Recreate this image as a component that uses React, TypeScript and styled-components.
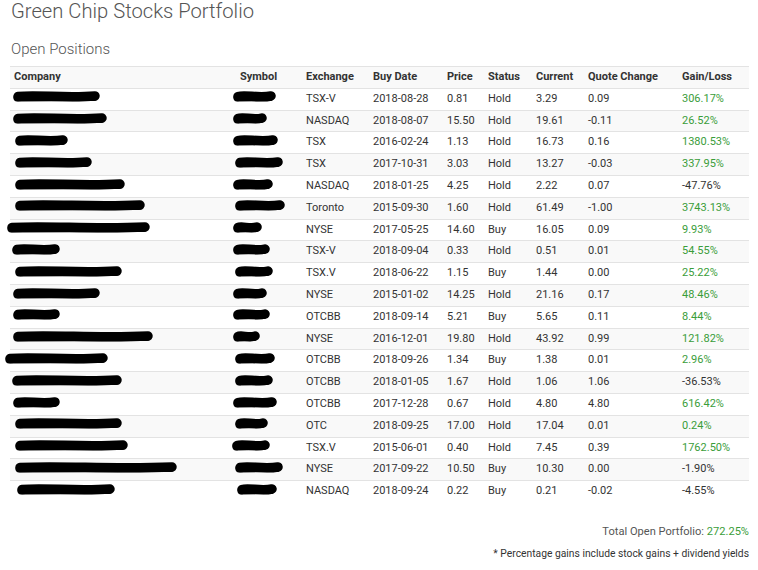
import React from "react";
import styled, { createGlobalStyle } from "styled-components";

const Global = createGlobalStyle`
  html, body { margin: 0; padding: 0; background: #fff; }
  body { font-family: Roboto, "Liberation Sans", Arial, sans-serif; color: #333; }
`;

const Page = styled.div`
  padding: 0 9px 0 10px;
  width: 758px;
  box-sizing: border-box;
`;

const Title = styled.h1`
  margin: 0;
  font-size: 20.2px;
  line-height: 22px;
  font-weight: 300;
  color: #555;
  padding-left: 1px;
`;

const Subtitle = styled.h2`
  margin: 19px 0 8px 1px;
  font-size: 15px;
  line-height: 17px;
  font-weight: 300;
  color: #555;
`;

const Table = styled.table`
  width: 100%;
  border-collapse: collapse;
  table-layout: fixed;
  font-size: 11px;
`;

const Row = styled.tr<{ $striped: boolean }>`
  background: ${(p) => (p.$striped ? "#f9f9f9" : "#fff")};
`;

const HeadCell = styled.th`
  text-align: left;
  font-weight: 700;
  color: #333;
  padding: 3px 4px;
  line-height: 14.8px;
  border-top: 1px solid #e3e3e3;
  white-space: nowrap;
`;

const Cell = styled.td<{ $green?: boolean }>`
  padding: 3px 4px;
  line-height: 14.8px;
  border-top: 1px solid #e3e3e3;
  color: ${(p) => (p.$green ? "#3a9d3a" : "#333")};
  white-space: nowrap;
  overflow: visible;
`;

const Blob = styled.svg<{ $shift: number }>`
  display: inline-block;
  vertical-align: middle;
  margin-left: ${(p) => p.$shift}px;
  margin-top: -4px;
  filter: blur(0.5px);
  overflow: visible;
`;

const Footer = styled.div`
  display: flex;
  flex-direction: column;
  align-items: flex-end;
  margin-top: 23px;
`;

const Total = styled.div`
  font-size: 11.1px;
  line-height: 14px;
  color: #555;
`;

const Green = styled.span`
  color: #3a9d3a;
`;

const Note = styled.div`
  margin-top: 8px;
  font-size: 10.3px;
  line-height: 13px;
  color: #333;
`;

function Redaction({ from, to, base }: { from: number; to: number; base: number }) {
  const w = to - from;
  const h = 11;
  return (
    <Blob $shift={from - base} width={w} height={h} viewBox={`0 0 ${w} ${h}`}>
      <path
        d={`M5 5.5 C ${w * 0.3} 3.5, ${w * 0.6} 7.5, ${w - 5} 5`}
        stroke="#000"
        strokeWidth={9.5}
        strokeLinecap="round"
        fill="none"
      />
      <path
        d={`M4 7 L ${w - 6} 6.5`}
        stroke="#000"
        strokeWidth={7}
        strokeLinecap="round"
        fill="none"
      />
    </Blob>
  );
}

type Pos = {
  c: [number, number];
  s: [number, number];
  ex: string;
  date: string;
  price: string;
  status: string;
  cur: string;
  qc: string;
  gl: string;
};

const rows: Pos[] = [
  { c: [13, 100], s: [233, 276], ex: "TSX-V", date: "2018-08-28", price: "0.81", status: "Hold", cur: "3.29", qc: "0.09", gl: "306.17%" },
  { c: [13, 107], s: [233, 267], ex: "NASDAQ", date: "2018-08-07", price: "15.50", status: "Hold", cur: "19.61", qc: "-0.11", gl: "26.52%" },
  { c: [15, 68], s: [233, 278], ex: "TSX", date: "2016-02-24", price: "1.13", status: "Hold", cur: "16.73", qc: "0.16", gl: "1380.53%" },
  { c: [15, 92], s: [235, 283], ex: "TSX", date: "2017-10-31", price: "3.03", status: "Hold", cur: "13.27", qc: "-0.03", gl: "337.95%" },
  { c: [15, 125], s: [233, 273], ex: "NASDAQ", date: "2018-01-25", price: "4.25", status: "Hold", cur: "2.22", qc: "0.07", gl: "-47.76%" },
  { c: [15, 145], s: [235, 285], ex: "Toronto", date: "2015-09-30", price: "1.60", status: "Hold", cur: "61.49", qc: "-1.00", gl: "3743.13%" },
  { c: [7, 150], s: [233, 262], ex: "NYSE", date: "2017-05-25", price: "14.60", status: "Buy", cur: "16.05", qc: "0.09", gl: "9.93%" },
  { c: [12, 60], s: [233, 270], ex: "TSX-V", date: "2018-09-04", price: "0.33", status: "Hold", cur: "0.51", qc: "0.01", gl: "54.55%" },
  { c: [15, 122], s: [235, 273], ex: "TSX.V", date: "2018-06-22", price: "1.15", status: "Buy", cur: "1.44", qc: "0.00", gl: "25.22%" },
  { c: [13, 100], s: [233, 267], ex: "NYSE", date: "2015-01-02", price: "14.25", status: "Hold", cur: "21.16", qc: "0.17", gl: "48.46%" },
  { c: [13, 60], s: [233, 270], ex: "OTCBB", date: "2018-09-14", price: "5.21", status: "Buy", cur: "5.65", qc: "0.11", gl: "8.44%" },
  { c: [13, 153], s: [233, 260], ex: "NYSE", date: "2016-12-01", price: "19.80", status: "Hold", cur: "43.92", qc: "0.99", gl: "121.82%" },
  { c: [5, 108], s: [235, 275], ex: "OTCBB", date: "2018-09-26", price: "1.34", status: "Buy", cur: "1.38", qc: "0.01", gl: "2.96%" },
  { c: [12, 122], s: [235, 273], ex: "OTCBB", date: "2018-01-05", price: "1.67", status: "Hold", cur: "1.06", qc: "1.06", gl: "-36.53%" },
  { c: [13, 60], s: [233, 277], ex: "OTCBB", date: "2017-12-28", price: "0.67", status: "Hold", cur: "4.80", qc: "4.80", gl: "616.42%" },
  { c: [15, 122], s: [235, 268], ex: "OTC", date: "2018-09-25", price: "17.00", status: "Hold", cur: "17.04", qc: "0.01", gl: "0.24%" },
  { c: [15, 128], s: [232, 270], ex: "TSX.V", date: "2015-06-01", price: "0.40", status: "Hold", cur: "7.45", qc: "0.39", gl: "1762.50%" },
  { c: [15, 177], s: [235, 283], ex: "NYSE", date: "2017-09-22", price: "10.50", status: "Buy", cur: "10.30", qc: "0.00", gl: "-1.90%" },
  { c: [17, 115], s: [237, 277], ex: "NASDAQ", date: "2018-09-24", price: "0.22", status: "Buy", cur: "0.21", qc: "-0.02", gl: "-4.55%" },
];

const colWidths = [226, 66, 67, 74, 41, 48, 52, 94, 71];
const headers = ["Company", "Symbol", "Exchange", "Buy Date", "Price", "Status", "Current", "Quote Change", "Gain/Loss"];

export default function App() {
  return (
    <Page>
      <Global />
      <Title>Green Chip Stocks Portfolio</Title>
      <Subtitle>Open Positions</Subtitle>
      <Table>
        <colgroup>
          {colWidths.map((w, i) => (
            <col key={i} style={{ width: w }} />
          ))}
        </colgroup>
        <tbody>
          <Row $striped>
            {headers.map((h) => (
              <HeadCell key={h}>{h}</HeadCell>
            ))}
          </Row>
          {rows.map((r, i) => (
            <Row key={i} $striped={i % 2 === 1}>
              <Cell>
                <Redaction from={r.c[0]} to={r.c[1]} base={14} />
              </Cell>
              <Cell>
                <Redaction from={r.s[0]} to={r.s[1]} base={240} />
              </Cell>
              <Cell>{r.ex}</Cell>
              <Cell>{r.date}</Cell>
              <Cell>{r.price}</Cell>
              <Cell>{r.status}</Cell>
              <Cell>{r.cur}</Cell>
              <Cell>{r.qc}</Cell>
              <Cell $green={!r.gl.startsWith("-")}>{r.gl}</Cell>
            </Row>
          ))}
        </tbody>
      </Table>
      <Footer>
        <Total>
          Total Open Portfolio: <Green>272.25%</Green>
        </Total>
        <Note>* Percentage gains include stock gains + dividend yields</Note>
      </Footer>
    </Page>
  );
}
